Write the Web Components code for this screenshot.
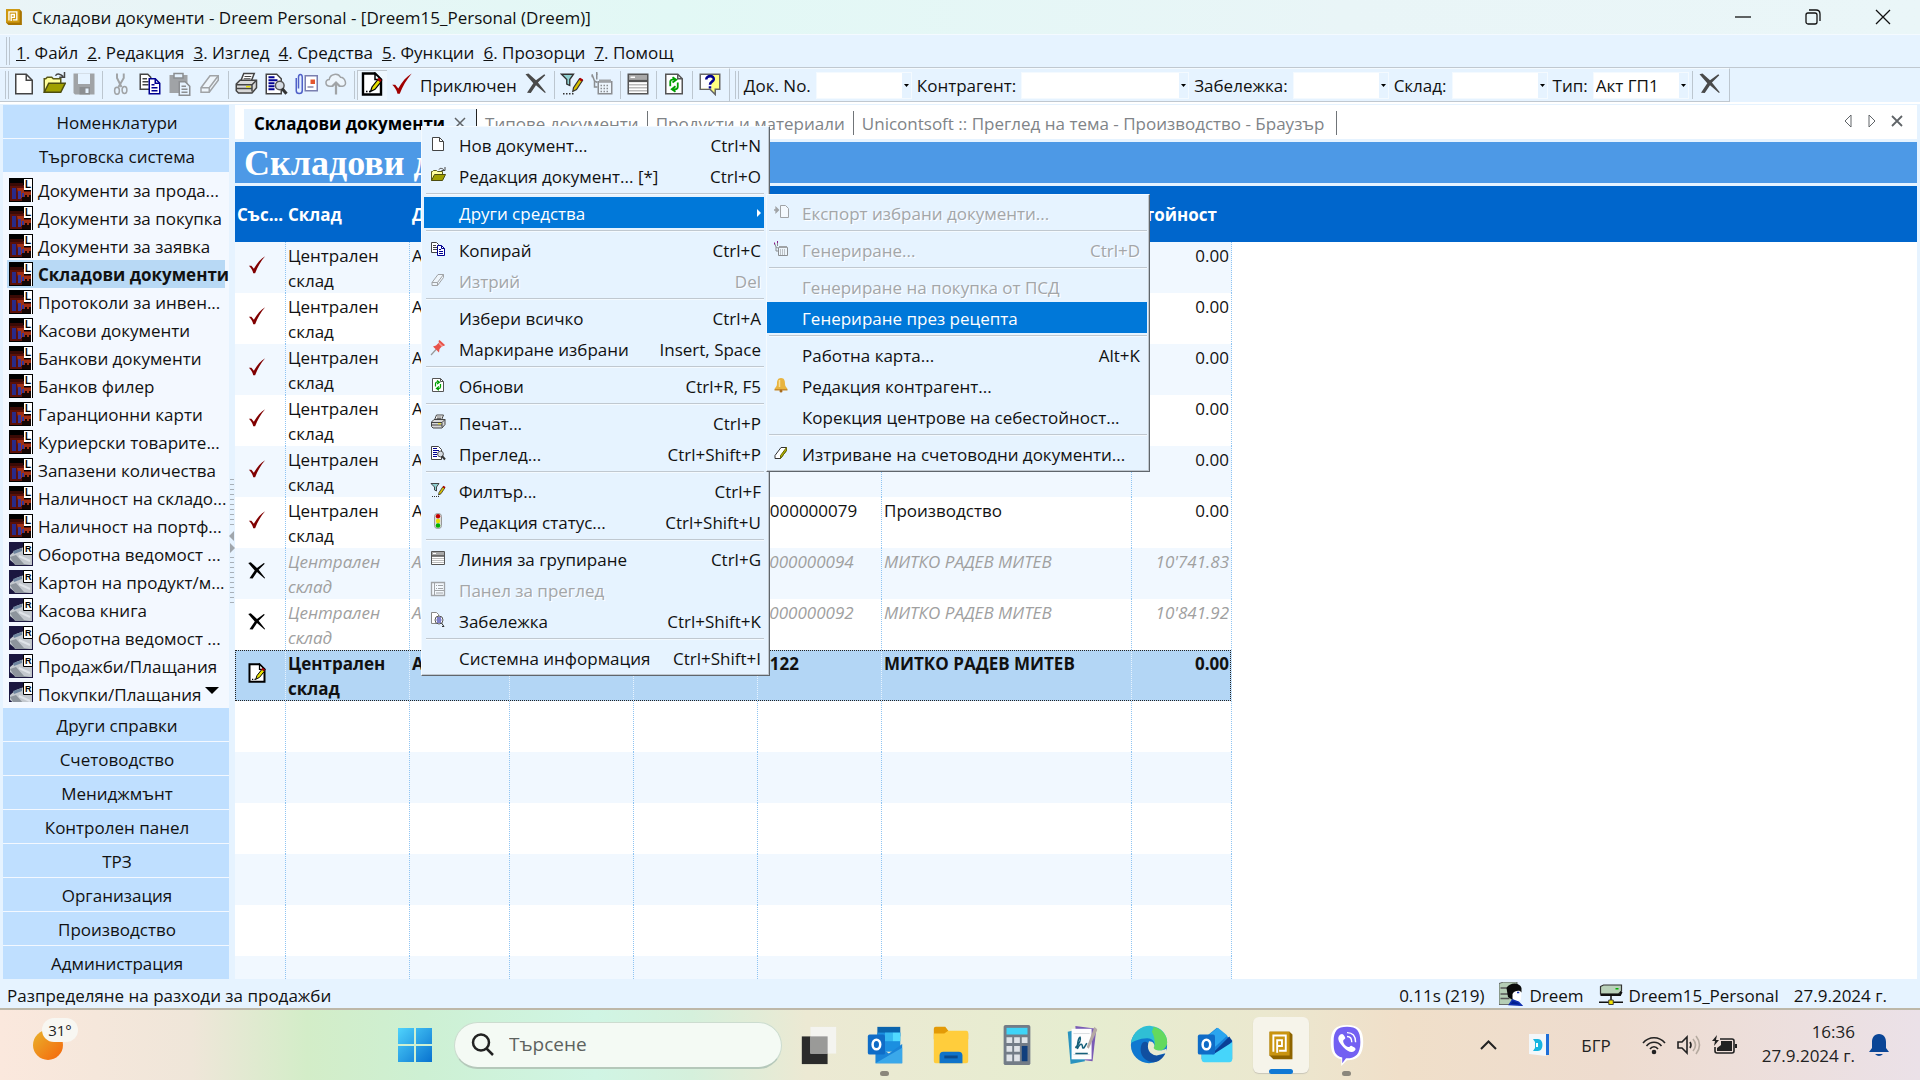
<!DOCTYPE html>
<html lang="bg">
<head>
<meta charset="utf-8">
<title>Складови документи - Dreem Personal</title>
<style>
    html, body { height: 100%; margin: 0; }
    body {
        font: 17px/25px "Open Sans", "Noto Sans", sans-serif;
        color: #111;
        background: #e6f3ff;
        overflow: hidden;
    }
    dreem-desktop { height: 100%; }
    #context-menu { left: 421px; top: 126px; width: 349px; }
    #tools-menu { left: 766px; top: 194px; width: 384px; --menu-start: 0px; --menu-end: 2px; --key-end: 7px; }
</style>
</head>
<body>

<dreem-desktop>
    <title-bar slot="title">Складови документи - Dreem Personal - [Dreem15_Personal (Dreem)]</title-bar>
    <menu-bar slot="menu" items="Файл,Редакция,Изглед,Средства,Функции,Прозорци,Помощ"></menu-bar>

    <tool-bar slot="tools">
        <tool-button icon="new" label="Нов"></tool-button>
        <tool-button icon="open" label="Отвори"></tool-button>
        <tool-button icon="save" label="Запис"></tool-button>
        <tool-sep></tool-sep>
        <tool-button icon="cut" label="Изрежи"></tool-button>
        <tool-button icon="copy" label="Копирай"></tool-button>
        <tool-button icon="paste" label="Постави"></tool-button>
        <tool-button icon="eraser-off" label="Изтрий"></tool-button>
        <tool-sep></tool-sep>
        <tool-button icon="print" label="Печат"></tool-button>
        <tool-button icon="preview" label="Преглед"></tool-button>
        <tool-button icon="attach" label="Прикачи"></tool-button>
        <tool-button icon="cloud" label="Облак"></tool-button>
        <tool-sep></tool-sep>
        <tool-button icon="edit" label="Редакция" pressed></tool-button>
        <tool-button icon="check" label="Приключен">Приключен</tool-button>
        <tool-button icon="cross" label="Анулиран"></tool-button>
        <tool-sep></tool-sep>
        <tool-button icon="filter" label="Филтър"></tool-button>
        <tool-button icon="generate" label="Генериране"></tool-button>
        <tool-sep></tool-sep>
        <tool-button icon="group" label="Групиране"></tool-button>
        <tool-sep></tool-sep>
        <tool-button icon="refresh" label="Обнови"></tool-button>
        <tool-sep></tool-sep>
        <tool-button icon="help" label="Помощ"></tool-button>
    </tool-bar>
    <tool-bar slot="tools">
        <tool-combo label="Док. No."></tool-combo>
        <tool-combo label="Контрагент:" wide></tool-combo>
        <tool-combo label="Забележка:"></tool-combo>
        <tool-combo label="Склад:"></tool-combo>
        <tool-combo label="Тип:" value="Акт ГП1"></tool-combo>
        <tool-sep></tool-sep>
        <tool-button icon="cross" label="Изчисти"></tool-button>
    </tool-bar>

    <side-nav slot="side"></side-nav>
    <doc-tabs slot="main">
        <span>Складови документи</span>
        <span>Типове документи</span>
        <span>Продукти и материали</span>
        <span>Unicontsoft :: Преглед на тема - Производство - Браузър</span>
    </doc-tabs>
    <doc-grid slot="main" heading="Складови документи"></doc-grid>

    <status-bar slot="status">
        Разпределяне на разходи за продажби
        <span slot="info">0.11s (219)</span>
        <span slot="user">Dreem</span>
        <span slot="db">Dreem15_Personal</span>
        <span slot="date">27.9.2024 г.</span>
    </status-bar>
    <task-bar slot="status"></task-bar>
</dreem-desktop>

<popup-menu id="context-menu">
    <menu-item icon="new" keys="Ctrl+N">Нов документ...</menu-item>
    <menu-item icon="open" keys="Ctrl+O">Редакция документ... [*]</menu-item>
    <menu-line></menu-line>
    <menu-item active submenu>Други средства</menu-item>
    <menu-line></menu-line>
    <menu-item icon="copy" keys="Ctrl+C">Копирай</menu-item>
    <menu-item icon="eraser-off" keys="Del" off>Изтрий</menu-item>
    <menu-line></menu-line>
    <menu-item keys="Ctrl+A">Избери всичко</menu-item>
    <menu-item icon="pin" keys="Insert, Space">Маркиране избрани</menu-item>
    <menu-line></menu-line>
    <menu-item icon="refresh" keys="Ctrl+R, F5">Обнови</menu-item>
    <menu-line></menu-line>
    <menu-item icon="print" keys="Ctrl+P">Печат...</menu-item>
    <menu-item icon="preview" keys="Ctrl+Shift+P">Преглед...</menu-item>
    <menu-line></menu-line>
    <menu-item icon="filter" keys="Ctrl+F">Филтър...</menu-item>
    <menu-item icon="lights" keys="Ctrl+Shift+U">Редакция статус...</menu-item>
    <menu-line></menu-line>
    <menu-item icon="group" keys="Ctrl+G">Линия за групиране</menu-item>
    <menu-item icon="panel" off>Панел за преглед</menu-item>
    <menu-item icon="note" keys="Ctrl+Shift+K">Забележка</menu-item>
    <menu-line></menu-line>
    <menu-item keys="Ctrl+Shift+I">Системна информация</menu-item>
</popup-menu>

<popup-menu id="tools-menu">
    <menu-item icon="export" off>Експорт избрани документи...</menu-item>
    <menu-line></menu-line>
    <menu-item icon="generate" keys="Ctrl+D" off>Генериране...</menu-item>
    <menu-line></menu-line>
    <menu-item off>Генериране на покупка от ПСД</menu-item>
    <menu-item active>Генериране през рецепта</menu-item>
    <menu-line></menu-line>
    <menu-item keys="Alt+K">Работна карта...</menu-item>
    <menu-item icon="bell">Редакция контрагент...</menu-item>
    <menu-item>Корекция центрове на себестойност...</menu-item>
    <menu-line></menu-line>
    <menu-item icon="eraser">Изтриване на счетоводни документи...</menu-item>
</popup-menu>

<script>
// 16x16 glyphs, shown at 16px in menus and 24px on toolbars
const GLYPHS = {
    'new': '<path d="M2.5 1.5h7l4 4v9h-11z" fill="#fff" stroke="#444"/><path d="M9.5 1.5v4h4" fill="none" stroke="#444"/>',
    'open': '<path d="M1.5 13.5v-9h1l1-1h3l1 1h5v3" fill="#ffff9c" stroke="#5a5a1a"/><path d="M1.5 13.5l3-6h11l-3 6z" fill="#a0a000" stroke="#4d4d10"/><path d="M9 2.5c1-2 4-1 5 .5M15 0v3.5h-3.500" fill="none" stroke="#444"/>',
    'save': '<path d="M1 1h14v14H2l-1-1z" fill="#a0a3a6"/><path d="M4 1h8v7H4z" fill="#e6f3ff"/><path d="M5 10h7v5H5z" fill="#8b8e91"/><path d="M9 11h2v3H9z" fill="#e6f3ff"/>',
    'cut': '<path d="M6 1v3l3 6M10.500 1v3L7 10" fill="none" stroke="#a0a3a6" stroke-width="1.300"/><ellipse cx="6" cy="12.500" rx="1.600" ry="2.300" fill="none" stroke="#a0a3a6"/><ellipse cx="11" cy="12" rx="1.600" ry="2.300" fill="none" stroke="#a0a3a6"/>',
    'copy': '<path d="M1.500 1.500h5l2 2v8h-7z" fill="#fff" stroke="#444"/><path d="M3 4.500h3M3 6.500h4M3 8.500h4" stroke="#444"/><path d="M7.500 4.500h4l3 3v7h-7z" fill="#fff" stroke="#000090"/><path d="M11.500 4.500v3h3M9 8.500h2M9 10.500h4M9 12.500h4" fill="none" stroke="#000090"/>',
    'paste': '<path d="M1.500 2.500h11v11h-11z" fill="#a0a3a6" stroke="#a0a3a6"/><path d="M4 1h6v3H4z" fill="#e6f3ff" stroke="#8b8e91"/><path d="M7.500 6.500h4l3 3v6h-7z" fill="#e6f3ff" stroke="#8b8e91"/><path d="M9 9.500h3M9 11.500h4M9 13.500h4" stroke="#8b8e91"/>',
    'eraser-off': '<path d="M2 10.500l6-8h5.500v3l-6 8H2z" fill="#eef5fb" stroke="#a0a3a6"/><path d="M2 10.500h5.500l6-8M7.500 10.500v3" fill="none" stroke="#a0a3a6"/>',
    'eraser': '<path d="M2 10.500l6-8h5.500v3l-6 8H2z" fill="#fff" stroke="#333"/><path d="M7.500 10.500l6-8v3l-6 8z" fill="#b5b500" stroke="#6b6b00"/>',
    'print': '<path d="M4.500 6l2-5h7l-2 5z" fill="#fff" stroke="#444"/><path d="M7 3h4.500M6.500 4.500H11" stroke="#444" stroke-width=".800"/><path d="M1.500 8l2.500-2.500h11v5l-3 3.500H3l-1.500-1.500z" fill="#d8d8d8" stroke="#444"/><path d="M1.500 8.500h10.500l3-3M12 8.500V13M2 11h10" fill="none" stroke="#444"/><path d="M8 9.300h3v1H8z" fill="#e8e000"/>',
    'preview': '<path d="M1.500 1.500h7l3 3v10h-10z" fill="#fff" stroke="#444"/><path d="M3 3.500h4M3 5.500h6M3 7.500h4M3 9.500h4M3 11.500h4" stroke="#000090" stroke-width="1.200"/><circle cx="10.500" cy="9" r="2.900" fill="#d5dbe2" stroke="#555"/><path d="M12 11l3 3.500" stroke="#333" stroke-width="2"/>',
    'attach': '<path d="M7.500 2.500h8v10h-8z" fill="#fff" stroke="#7a7fb0"/><path d="M11 5h3v3h-3z" fill="#e4572e"/><path d="M9 10h4" stroke="#88a"/><path d="M1.500 4v8.500c0 2.500 4 2.500 4 0V3.500c0-2.500-2.500-2.500-2.500 0V11" fill="none" stroke="#5060c8"/>',
    'cloud': '<path d="M4 9.500C.5 9.500.5 5 3.500 5 4 1 9.500.5 11 3.500c3 0 5 5.500 1.500 6H10M6 9.500H4" fill="#edf5fc" stroke="#a0a3a6"/><path d="M8 15V7M5.500 9.500L8 7l2.500 2.500" fill="none" stroke="#a0a3a6" stroke-width="1.500"/>',
    'edit': '<path d="M2 1h8l4 4v10H2z" fill="#fff" stroke="#000" stroke-width="1.600"/><path d="M10 1v4h4z" fill="#fff" stroke="#000"/><path d="M7 13l1-3 4-5 2 1.500-4 5z" fill="#e8e000" stroke="#000" stroke-width=".800"/><path d="M12 4.500l2 1.500" stroke="#b00000" stroke-width="1.600"/><path d="M4 13h3" stroke="#000" stroke-dasharray="1 1"/>',
    'check': '<path d="M1.500 8.500l2 0 2 2.500C8 6.500 11 3 14.500 1 11 5 8.500 9.500 6.500 14.500l-1.500 0C4.500 12 3 10 1.500 8.500z" fill="var(--tick, #a00000)"/>',
    'cross': '<path d="M1 1.500L3 1l5 4.500L13.500 1.500l.7.700L9.300 7l5.200 6.500-.5.500L8 8.800 4.500 14 2 13.800 6.200 7.500z" fill="var(--cross, #4a4a4a)"/>',
    'filter': '<path d="M1 1.500h8L6.500 5v4l-2-1V5z" fill="#8fd0d0" stroke="#333" stroke-width=".900"/><path d="M8.500 13l.5-2.500 4-6 2 1.200-4 6z" fill="#d8c000" stroke="#333" stroke-width=".800"/><path d="M13 4.500l2 1.200" stroke="#b00000" stroke-width="1.600"/><path d="M2 14.500h7" stroke="#333" stroke-dasharray="1 1"/>',
    'generate': '<path d="M5.500 6.500h9v8h-9z" fill="#edf5fc" stroke="#8b8e91"/><path d="M6 5h8v2H6z" fill="#a0a3a6"/><path d="M7 9h6M7 11h6M7 13h6" stroke="#8b8e91" stroke-dasharray="1 1"/><path d="M1.500 2l1.500 4 2 1M4.500 1v4M3 6v4h2" fill="none" stroke="#8b8e91"/><path d="M1.500 1.500v2M4.500 0v2" stroke="var(--spark, #8b8e91)"/>',
    'group': '<path d="M1.500 1.500h13v13h-13z" fill="#fff" stroke="#555"/><path d="M2 2h12v4H2z" fill="#a8a8a8"/><path d="M3 3.500h3" stroke="#fff"/><path d="M1.500 6h13" stroke="#555" stroke-width="1.500"/><path d="M2 8.500h12M2 10.500h12M2 12.500h12" stroke="#bbb"/>',
    'refresh': '<path d="M2.500 1.500h8l3 3v10h-11z" fill="#fff" stroke="#555"/><path d="M10.500 1.500v3h3" fill="none" stroke="#555"/><path d="M5.500 9.500V6.500c0-2 4-2 4-1M7 3.500l2.500 1.700L7 7M10.500 7v3c0 2-4 2-4 1M9 9.500l-2.500 2L9 13.200" fill="none" stroke="#00a000" stroke-width="1.200"/>',
    'help': '<path d="M1.500 1.500h13v10h-3v3.500l-3.500-3.500h-6.500z" fill="#ffff80" stroke="#666"/><path d="M5 2h4v9H2v-9z" fill="#fff"/><path d="M5.500 5c0-3 5.500-3 5 0-.3 1.500-2.500 1.500-2.500 3.500M8 9.500v1.500" fill="none" stroke="#000090" stroke-width="1.700"/>',
    'pin': '<path d="M1 15l5.500-6" stroke="#999" stroke-width="1.200"/><path d="M3 6.500l3-1 3-3-.5-1.500 1-1 5.500 5-1 1-1.500-.3-3 3.300-.5 3.500z" fill="#e8524a"/><path d="M9 3l3.500 3.500" stroke="#f59a92" stroke-width="1.500"/>',
    'lights': '<rect x="4.500" y=".500" width="7" height="15" rx="3" fill="#ddd" stroke="#999"/><circle cx="8" cy="3.300" r="2.200" fill="#c00000"/><circle cx="8" cy="8" r="2.200" fill="#e8e000"/><circle cx="8" cy="12.500" r="2.300" fill="#00b000"/>',
    'panel': '<path d="M1.500 1.500h13v13h-13z" fill="#f4f9fe" stroke="#a0a3a6" stroke-width="1.300"/><path d="M4.500 2v12M6 4.500h1M8 4.500h5M6 7.500h1M8 7.500h5M5 9.500h9M6 12h7" stroke="#a0a3a6"/>',
    'note': '<path d="M1.500 .5h5l2 2v9h-7z" fill="#fff" stroke="#888"/><circle cx="9" cy="8" r="4" fill="#fff" stroke="#555"/><path d="M7 6h4M6.500 8h5M7 10h4" stroke="#000090"/><path d="M11.500 11l2.500 3.500h-2" stroke="#333" fill="none"/>',
    'export': '<path d="M7.500 1.500h5l3 3v9h-8z" fill="#f4f9fe" stroke="#a0a3a6"/><path d="M1 6h4M3 3.500L5.500 6 3 8.500z" stroke="#a0a3a6" fill="#a0a3a6" stroke-width="1.300"/>',
    'bell': '<path d="M8 1c3.500 0 4 3 4 6 0 2.500 2 3.500 2.500 5h-13C2 10.500 4 9.500 4 7c0-3 .500-6 4-6z" fill="#e8b440"/><path d="M6.500 3v7" stroke="#f9df95" stroke-width="1.500"/><path d="M1.500 12h13v1.500h-13z" fill="#c98a2b"/><circle cx="8" cy="14" r="1.500" fill="#a86a1c"/>',
    'ledger': '<path d="M0 0h24v24H0z" fill="#000"/><path d="M1 7h14v6h7v10H1z" fill="#5c1008"/><path d="M1 5h13v3H1z" fill="#3a0a05"/><path d="M8 10h7v4h7v6H10z" fill="#a03014"/><path d="M3 10h4v11H3z" fill="#2a2a88"/><path d="M9 13h3v8H9zM13 15h2v6h-2z" fill="#35359a"/><path d="M13 19h3v-2h2v2h2v-2h2v6H13z" fill="#140604"/><path d="M15 1h8v11h-8z" fill="#fff"/><text x="16" y="10" font-family="Liberation Sans" font-weight="bold" font-size="10">L</text><path d="M22.500 12v12" stroke="#fff"/>',
    'report': '<path d="M0 0h24v24H0z" fill="#1b1740"/><path d="M1 13l6-5 8-3v8h8v10H7L1 18z" fill="#c3c8ce"/><path d="M4 9l9-3v3L5 12z" fill="#6f86a0"/><path d="M1 15l6-2 8 9 6 1H6z" fill="#8d949c"/><path d="M10 14l11 5" stroke="#dfe3e8" stroke-width="2"/><path d="M14.500 .5h9v12h-9z" fill="#fff" stroke="#000"/><text x="16" y="10" font-family="Liberation Sans" font-weight="bold" font-size="9">R</text>',
    'dreem': '<path d="M1 1h12l2 2v12H3l-2-2z" fill="#a87400"/><path d="M1 1h12v12H1z" fill="#d09a10"/><path d="M3.500 11V3.500h7v7H7M5.500 11.500V5.800h2.800v2.500H6" fill="none" stroke="#fff" stroke-width="1.200"/>',
    'user': '<path d="M0 1l3-1h9v15H0z" fill="#b5ceb5" stroke="#444" stroke-width=".500"/><path d="M1 4h7M1 8h6M1 11h6" stroke="#555"/><path d="M5 4c2-4 9-4 10 0v3h-2c-3 0-3 2-4 5l-3-2z" fill="#0a0a0a"/><path d="M9 8c1-2 5-3 6-1l-.5 5-3 1-2.500-2z" fill="#fff"/><path d="M12 7h1.500M7 15l2-3 4 1.500 2 2z" stroke="#1030b0" fill="#002090"/>',
    'server': '<path d="M1 3l2-1h12v4l-2 2H1z" fill="#b9d1b9" stroke="#333" stroke-width=".800"/><path d="M11 4.500h2" stroke="#00b000"/><path d="M1 8.500h13l1-2" stroke="#111" stroke-width="1.500" fill="none"/><path d="M8 8v4M0 13.500h16" stroke="#111"/><path d="M6.500 12h3v3h-3z" fill="#f0e000" stroke="#333" stroke-width=".600"/>'
};

class AppIcon extends HTMLElement {
    constructor() {
        super();
        this.attachShadow({ mode: 'open' });
    }

    connectedCallback() {
        const name = this.getAttribute('name');
        const box = name === 'ledger' || name === 'report' ? 24 : 16;
        this.shadowRoot.innerHTML = `
        <style>
            :host { display: block; flex: none; width: var(--icon, 16px); height: var(--icon, 16px); }
            svg { display: block; width: 100%; height: 100%; }
        </style>
        <svg viewBox="0 0 ${box} ${box}" aria-hidden="true">${GLYPHS[name] || ''}</svg>
        `;
    }
}

class DreemDesktop extends HTMLElement {
    constructor() {
        super();
        this.attachShadow({ mode: 'open' });
        this.shadowRoot.innerHTML = `
        <style>
            :host { display: flex; flex-direction: column; }
            .tools {
                display: flex;
                height: 34px;
                border-top: 1px solid #c0c8d0;
                border-bottom: 2px solid #fff;
            }
            .work { flex: 1; min-height: 0; display: flex; padding: 1px 3px 0; }
            .grip {
                width: 6px;
                display: flex;
                flex-direction: column;
                justify-content: center;
                align-items: center;
                gap: 4px;
            }
            .grip i { width: 4px; height: 48px; background: repeating-linear-gradient(#a8b0b8 0 1px, transparent 1px 5px); }
            .grip svg { display: block; }
            main { flex: 1; min-width: 0; display: flex; flex-direction: column; }
        </style>
        <slot name="title"></slot>
        <slot name="menu"></slot>
        <div class="tools"><slot name="tools"></slot></div>
        <div class="work">
            <slot name="side"></slot>
            <div class="grip">
                <i></i>
                <svg width="6" height="22"><path d="M5 0v10L0 5zM1 12v10l5-5z" fill="#a0a6ac"/></svg>
                <i></i>
            </div>
            <main><slot name="main"></slot></main>
        </div>
        <slot name="status"></slot>
        `;
    }
}

class TitleBar extends HTMLElement {
    constructor() {
        super();
        this.attachShadow({ mode: 'open' });
        this.shadowRoot.innerHTML = `
        <style>
            :host {
                display: flex;
                align-items: center;
                gap: 9px;
                height: 34px;
                padding: 0 2px 0 5px;
                background: linear-gradient(90deg, #eaf4f7, #e2f8f5 35%, #e9f5f7 70%, #eaf6f8);
            }
            app-icon { --icon: 18px; }
            span { flex: 1; }
            .buttons { display: flex; }
            button { width: 70px; height: 34px; padding: 0; border: 0; background: none; }
            svg { display: block; margin: auto; fill: none; stroke: #111; stroke-width: 1.3; }
        </style>
        <app-icon name="dreem"></app-icon>
        <span><slot></slot></span>
        <div class="buttons">
            <button aria-label="Минимизиране"><svg width="16" height="16"><path d="M0 8h16"/></svg></button>
            <button aria-label="Възстановяване"><svg width="16" height="16"><rect x="1" y="4" width="11" height="11" rx="2"/><path d="M4 1h7q4 0 4 4v7"/></svg></button>
            <button aria-label="Затваряне"><svg width="16" height="16"><path d="M1 1l14 14M15 1L1 15"/></svg></button>
        </div>
        `;
    }
}

class MenuBar extends HTMLElement {
    constructor() {
        super();
        this.attachShadow({ mode: 'open' });
    }

    connectedCallback() {
        const items = this.getAttribute('items').split(',');
        this.shadowRoot.innerHTML = `
        <style>
            :host { display: flex; align-items: center; height: 32px; padding-left: 6px; border-top: 1px solid #f4faff; }
            i { width: 2px; height: 28px; border: 1px solid #bcc6cf; border-width: 0 1px; margin-right: 2px; }
            button { font: inherit; color: inherit; border: 0; background: none; padding: 2px 5px 0 4px; }
        </style>
        <i></i>
        ${items.map((text, n) => `<button><u>${n + 1}</u>. ${text}</button>`).join('')}
        `;
    }
}

class ToolBar extends HTMLElement {
    constructor() {
        super();
        this.attachShadow({ mode: 'open' });
        this.shadowRoot.innerHTML = `
        <style>
            :host {
                display: flex;
                align-items: center;
                padding: 0 4px 0 5px;
                border-right: 1px solid #bcc6cf;
                border-bottom: 1px solid #c0c8d0;
                border-top: 1px solid #f4faff;
            }
            i { width: 2px; height: 28px; border: 1px solid #bcc6cf; border-width: 0 1px; }
        </style>
        <i></i>
        <slot></slot>
        `;
    }
}

class ToolSep extends HTMLElement {
    constructor() {
        super();
        this.attachShadow({ mode: 'open' });
        this.shadowRoot.innerHTML = `
        <style>
            :host { display: block; width: 1px; height: 28px; margin: 0 2px 0 3px; background: #bcc6cf; }
        </style>
        `;
    }
}

class ToolButton extends HTMLElement {
    constructor() {
        super();
        this.attachShadow({ mode: 'open' });
    }

    connectedCallback() {
        this.shadowRoot.innerHTML = `
        <style>
            :host { display: block; --icon: 24px; }
            button {
                display: flex;
                align-items: center;
                gap: 6px;
                height: 30px;
                padding: 0 3px;
                border: 0;
                background: none;
                font: inherit;
                color: inherit;
            }
            app-icon { margin-bottom: 3px; }
            span { padding: 1px 1px 0 0; }
            span.empty { display: none; }
            :host([pressed]) button { background: #eef7ff; box-shadow: inset 1px 1px #c0c8d0; }
        </style>
        <button aria-label="${this.getAttribute('label')}">
            <app-icon name="${this.getAttribute('icon')}"></app-icon>
            <span class="${this.textContent.trim() ? '' : 'empty'}"><slot></slot></span>
        </button>
        `;
    }
}

class ToolCombo extends HTMLElement {
    constructor() {
        super();
        this.attachShadow({ mode: 'open' });
    }

    connectedCallback() {
        this.shadowRoot.innerHTML = `
        <style>
            :host { display: flex; align-items: center; gap: 5px; margin-left: 5px; }
            label { padding-top: 1px; }
            .box { position: relative; }
            select {
                display: block;
                box-sizing: border-box;
                width: 96px;
                height: 27px;
                padding: 0 10px 0 2px;
                border: 1px solid #f4faff;
                border-radius: 0;
                appearance: none;
                font: inherit;
                color: inherit;
                background: linear-gradient(90deg, #fff calc(100% - 9px), #e6f3ff 0);
            }
            :host([wide]) select { width: 168px; }
            svg { position: absolute; right: 3px; top: 12px; pointer-events: none; }
        </style>
        <label for="field">${this.getAttribute('label')}</label>
        <div class="box">
            <select id="field"><option>${this.getAttribute('value') || ''}</option></select>
            <svg width="5" height="3"><path d="M0 0h5L2.500 3z"/></svg>
        </div>
        `;
    }
}

class SideNav extends HTMLElement {
    constructor() {
        super();
        this.attachShadow({ mode: 'open' });
    }

    connectedCallback() {
        const ledgers = ['Документи за прода...', 'Документи за покупка', 'Документи за заявка', 'Складови документи',
            'Протоколи за инвен...', 'Касови документи', 'Банкови документи', 'Банков филер', 'Гаранционни карти',
            'Куриерски товарите...', 'Запазени количества', 'Наличност на складо...', 'Наличност на портф...'];
        const reports = ['Оборотна ведомост ...', 'Картон на продукт/м...', 'Касова книга', 'Оборотна ведомост ...',
            'Продажби/Плащания', 'Покупки/Плащания'];
        const below = ['Други справки', 'Счетоводство', 'Мениджмънт', 'Контролен панел', 'ТРЗ', 'Организация',
            'Производство', 'Администрация'];

        const group = text => `<button class="group">${text}</button>`;
        const item = icon => text => `
            <button class="item${text === 'Складови документи' ? ' current' : ''}">
                <app-icon name="${icon}"></app-icon>${text}
            </button>`;

        this.shadowRoot.innerHTML = `
        <style>
            :host {
                flex: none;
                display: flex;
                flex-direction: column;
                gap: 1px;
                width: 226px;
                background: #f3f8ff;
                --icon: 24px;
            }
            button { font: inherit; color: inherit; border: 0; white-space: nowrap; }
            .group { flex: none; height: 33px; padding: 2px 0 0 2px; background: #bfdfff; }
            .list {
                flex: 1;
                min-height: 0;
                overflow: hidden;
                position: relative;
                padding: 3px 4px 0;
                border-bottom: 5px solid #f3f8ff;
            }
            .item {
                display: flex;
                align-items: center;
                gap: 5px;
                width: 100%;
                height: 28px;
                padding: 0 0 0 2px;
                background: none;
            }
            .current { background: #b8d9f5; font-weight: bold; }
            .down { position: absolute; right: 10px; bottom: 8px; padding: 0; background: none; }
            .down svg { display: block; }
        </style>
        ${group('Номенклатури')}
        ${group('Търговска система')}
        <div class="list">
            ${ledgers.map(item('ledger')).join('')}
            ${reports.map(item('report')).join('')}
            <button class="down" aria-label="Надолу"><svg width="14" height="7"><path d="M0 0h14L7 7z"/></svg></button>
        </div>
        ${below.map(group).join('')}
        `;
    }
}

class DocTabs extends HTMLElement {
    constructor() {
        super();
        this.attachShadow({ mode: 'open' });
    }

    connectedCallback() {
        const names = [...this.querySelectorAll('span')].map(el => el.textContent);
        this.shadowRoot.innerHTML = `
        <style>
            :host { display: flex; height: 34px; padding-left: 9px; background: #fff; margin-bottom: 3px; }
            button { font: inherit; border: 0; background: none; padding: 0; }
            .tab {
                display: flex;
                align-items: center;
                gap: 9px;
                height: 24px;
                margin-top: 6px;
                padding: 0 8px;
                color: #808488;
                border-right: 1px solid #707478;
            }
            .tab:last-of-type { padding-right: 12px; }
            .tab.on {
                height: 30px;
                margin-top: 4px;
                padding: 0 10px 2px;
                box-sizing: border-box;
                color: #000;
                font-weight: bold;
                background: #e6f3ff;
                border-right: 1px solid #222;
            }
            .nav { margin-left: auto; display: flex; align-items: center; gap: 14px; padding: 0 14px 2px 0; }
            svg { display: block; fill: none; stroke: #606468; }
        </style>
        ${names.map((name, n) => n
            ? `<button class="tab">${name}</button>`
            : `<button class="tab on">${name}<svg width="12" height="12"><path d="M1 1l10 10M11 1L1 11" stroke-width="1.500"/></svg></button>`).join('')}
        <div class="nav">
            <button aria-label="Назад"><svg width="10" height="14"><path d="M8 1v12L2 7z"/></svg></button>
            <button aria-label="Напред"><svg width="10" height="14"><path d="M2 1v12l6-6z"/></svg></button>
            <button aria-label="Затвори"><svg width="12" height="14"><path d="M1 2l10 10M11 2L1 12" stroke-width="1.800"/></svg></button>
        </div>
        `;
    }
}

class DocGrid extends HTMLElement {
    constructor() {
        super();
        this.attachShadow({ mode: 'open' });
    }

    connectedCallback() {
        const rows = [
            ...Array(5).fill(['check', '', '', '0.00', '']),
            ['check', '0000000079', 'Производство', '0.00', ''],
            ['cross', '0000000094', 'МИТКО РАДЕВ МИТЕВ', "10'741.83", 'void'],
            ['cross', '0000000092', 'МИТКО РАДЕВ МИТЕВ', "10'841.92", 'void'],
            ['edit', '1122', 'МИТКО РАДЕВ МИТЕВ', '0.00', 'current']
        ];
        const blank = '<tr>' + '<td></td>'.repeat(9) + '</tr>';

        this.shadowRoot.innerHTML = `
        <style>
            :host { flex: 1; min-height: 0; overflow: hidden; display: block; background: #fff; }
            h1 {
                margin: 0;
                padding: 0 9px;
                height: 41px;
                font: bold 36px/42px "Liberation Serif", serif;
                color: #fff;
                background: #4d99e6;
                border-bottom: 3px solid #e6f3ff;
            }
            table { width: 100%; table-layout: fixed; border-collapse: separate; border-spacing: 0; }
            th {
                height: 56px;
                padding: 0 2px;
                box-sizing: border-box;
                text-align: left;
                white-space: nowrap;
                color: #fff;
                background: #0066cc;
            }
            td {
                height: 51px;
                box-sizing: border-box;
                padding: 1px 2px 0;
                line-height: 25px;
                vertical-align: top;
                border-right: 1px dotted #8fc4f2;
            }
            td:first-child { vertical-align: middle; --icon: 20px; --tick: #800000; --cross: #000; }
            td:first-child app-icon { margin: 0 0 6px 10px; }
            td:nth-child(8) { text-align: right; }
            tr:nth-child(odd) td { background: #f1f8ff; }
            tr td:last-child { background: #fff !important; border: 0; }
            .void { color: #a0a0a0; font-style: italic; }
            tr.current td {
                position: relative;
                font-weight: bold;
                background: #b3d6f5;
                border-color: #e6f3ff;
            }
            /* focus frame drawn over the cells */
            tr.current td:not(:last-child)::after {
                content: "";
                position: absolute;
                inset: 0;
                border: 0 dotted #222;
                border-width: 1px 0;
            }
            tr.current td:first-child::after { border-left-width: 1px; }
            tr.current td:nth-child(8)::after { border-right-width: 1px; }
        </style>
        <h1>${this.getAttribute('heading')}</h1>
        <table>
            <colgroup>
                <col width="51"><col width="124"><col width="100"><col width="124"><col width="124">
                <col width="124"><col width="250"><col width="100"><col>
            </colgroup>
            <thead>
                <tr><th>Със...</th><th>Склад</th><th>Д</th><th></th><th></th><th></th><th></th><th>Стойност</th><th></th></tr>
            </thead>
            <tbody>
                ${rows.map(([state, number, client, total, kind]) => `
                <tr class="${kind}">
                    <td><app-icon name="${state}"></app-icon></td>
                    <td>Централен склад</td><td>А</td><td></td><td></td>
                    <td>${number}</td><td>${client}</td><td>${total}</td><td></td>
                </tr>`).join('')}
                ${blank.repeat(6)}
            </tbody>
        </table>
        `;
    }
}

class PopupMenu extends HTMLElement {
    constructor() {
        super();
        this.attachShadow({ mode: 'open' });
        this.shadowRoot.innerHTML = `
        <style>
            :host {
                position: absolute;
                display: block;
                box-sizing: border-box;
                padding: 2px var(--menu-end, 5px) 2px var(--menu-start, 2px);
                background: #e6f3ff;
                border: 1px solid #f4faff;
                border-right-color: #60666c;
                border-bottom-color: #60666c;
                box-shadow: inset -1px -1px #c0c8d0;
                --spark: #8a1c8a;
            }
        </style>
        <slot></slot>
        `;
    }
}

class MenuLine extends HTMLElement {
    constructor() {
        super();
        this.attachShadow({ mode: 'open' });
        this.shadowRoot.innerHTML = `
        <style>
            :host { display: block; height: 1px; margin: 2px 0 2px 2px; background: #c0c8d0; border-bottom: 1px solid #f4faff; }
        </style>
        `;
    }
}

class MenuItem extends HTMLElement {
    constructor() {
        super();
        this.attachShadow({ mode: 'open' });
    }

    connectedCallback() {
        const off = this.hasAttribute('off');
        this.shadowRoot.innerHTML = `
        <style>
            :host { display: block; }
            button {
                display: flex;
                align-items: center;
                width: 100%;
                height: 31px;
                padding: 0 var(--key-end, 3px) 0 6px;
                border: 0;
                background: none;
                font: inherit;
                color: inherit;
                text-align: left;
                white-space: nowrap;
            }
            app-icon { margin-bottom: 2px; }
            span { flex: 1; padding: 2px 0 0 13px; }
            kbd { font: inherit; padding-top: 1px; }
            button:disabled { color: #a3a6a9; text-shadow: 1px 1px #fff; }
            :host([active]) button { color: #fff; background: #0078d9; }
        </style>
        <button ${off ? 'disabled' : ''}>
            <app-icon name="${this.getAttribute('icon') || ''}"></app-icon>
            <span><slot></slot></span>
            ${this.hasAttribute('keys') ? `<kbd>${this.getAttribute('keys')}</kbd>` : ''}
            ${this.hasAttribute('submenu') ? '<svg width="4" height="8"><path d="M0 0v8l4-4z" fill="#fff"/></svg>' : ''}
        </button>
        `;
    }
}

class StatusBar extends HTMLElement {
    constructor() {
        super();
        this.attachShadow({ mode: 'open' });
        this.shadowRoot.innerHTML = `
        <style>
            :host {
                display: flex;
                align-items: center;
                box-sizing: border-box;
                height: 29px;
                padding: 3px 33px 0 7px;
                --icon: 24px;
            }
            .text { flex: 1; }
            .cell { display: flex; align-items: center; gap: 6px; margin-left: 15px; }
            app-icon { margin-bottom: 2px; }
        </style>
        <span class="text"><slot></slot></span>
        <span class="cell"><slot name="info"></slot></span>
        <span class="cell"><app-icon name="user"></app-icon><slot name="user"></slot></span>
        <span class="cell"><app-icon name="server"></app-icon><slot name="db"></slot></span>
        <span class="cell"><slot name="date"></slot></span>
        `;
    }
}

// Pinned programs, drawn on a 44x46 grid
const APPS = [
    ['Изглед на задачи', '', '<path d="M4 14h27v29H4z" fill="#2b2b2b"/><path d="M13 4h27v28H13z" fill="#f4f4f2" opacity=".92"/><path d="M13 14h18v18H13z" fill="#9a9a98"/>'],
    ['Outlook', 'run', '<path d="M14 4h24v10H14z" fill="#0a64ad"/><path d="M14 10h24v20H14z" fill="#1b8fe0"/><path d="M22 10h8v9h-8z" fill="#35b8f1"/><path d="M30 10h8v9h-8z" fill="#50d9ff"/><path d="M12 22l14 10 14-10v20H12z" fill="#1a84d8"/><path d="M12 42l28-16v16z" fill="#3aa8ea"/><rect x="4" y="12" width="18" height="21" rx="2" fill="#0f6cc7"/><ellipse cx="13" cy="22.500" rx="4" ry="5" fill="none" stroke="#fff" stroke-width="2.600"/>'],
    ['Файлове', '', '<path d="M4 6q0-2 2-2h10l4 5h18q2 0 2 2v6H4z" fill="#e39a06"/><path d="M4 11h11l4-3h19q2 0 2 2v30q0 2-2 2H6q-2 0-2-2z" fill="#ffcd3c"/><path d="M10 42V34q0-4 4-4h16q4 0 4 4v8z" fill="#0f73c9"/><path d="M15 35.500h14" stroke="#0a4a8c" stroke-width="3"/>'],
    ['Калкулатор', '', '<rect x="8" y="2" width="28" height="42" rx="2" fill="#737c87"/><path d="M11 5h22v7H11z" fill="#3fd4f7"/><g fill="#dfe3e8"><path d="M11 15h6v6h-6zM19 15h6v6h-6zM27 15h6v6h-6zM11 24h6v6h-6zM19 24h6v6h-6zM11 33h6v7h-6zM19 33h6v7h-6z"/></g><path d="M27 24h6v16h-6z" fill="#113f7d"/>'],
    ['Whiteboard', '', '<path d="M14 3l22 3-4 34-16-2z" fill="#7a5bb5"/><path d="M6 9l14-3 4 34-15 3z" fill="#2a93bf"/><path d="M10 6h21v32H10z" fill="#fdfdfd"/><path d="M12 11h17M12 33h17" stroke="#d8dce0"/><path d="M14 26c3-3 6-8 5-11-2 0-3 8-3 12 2-4 4-6 5-4s0 4 2 3l3-5M14 32h13" fill="none" stroke="#15607a" stroke-width="1.600"/><path d="M34 4l-8 21 2 2 9-20z" fill="#b5a9a4"/>'],
    ['Edge', '', '<circle cx="22" cy="23" r="19" fill="#0f78d0"/><path d="M3 21C5 8 16 2 24 3c12 1 17 10 17 17 0 5-4 9-9 9-4 0-6-1-5-3 3-5-1-10-7-10C12 16 5 20 3 21z" fill="#2fbfd5"/><path d="M27 4c10 3 14 10 14 16 0 5-4 9-9 9-4 0-6-1-5-3 2-4 1-12-2-17z" fill="#63d95e"/><path d="M14 23c-3 10 4 18 13 18 5 0 10-4 12-9-9 4-17 1-17-8 0-4-6-7-8-1z" fill="#114fa0"/><path d="M22 19c-3 7 0 14 8 15l11-3-1-4c-5 3-13 2-13-1 2-4-1-7-5-7z" fill="#eaead2"/>'],
    ['Поща', '', '<path d="M8 18L24 5l16 13v20H8z" fill="#1680d8"/><path d="M16 12L25 5l10 8-14 13z" fill="#2aa5ef"/><path d="M20 31l17-17 3 5-13 15z" fill="#0a3f96"/><path d="M8 26l12 7 20-13v18q0 3-3 3H11q-3 0-3-3z" fill="#46d5fa"/><rect x="4" y="12" width="18" height="21" rx="2" fill="#0f6cc7"/><ellipse cx="13" cy="22.500" rx="4" ry="5" fill="none" stroke="#fff" stroke-width="2.600"/>'],
    ['Dreem', 'on', '<path d="M10 9h21l3 3v26H14l-4-4z" fill="#8e6400"/><path d="M10 9h21v25H10z" fill="#c99410"/><path d="M14 30V13h13v16H20M18 31V18h5v6h-4" fill="none" stroke="#fff" stroke-width="2"/>'],
    ['Viber', 'run', '<path d="M22 2c12 0 17 5 17 18s-6 19-17 19l-6 6v-7C8 36 5 30 5 20 5 7 10 2 22 2z" fill="#fff"/><path d="M22 4c10 0 14 4 14 16s-5 17-14 17h-1l-4 5v-6C9 34 8 29 8 20 8 8 12 4 22 4z" fill="#7360f2"/><path d="M15 12c-4 3-2 8 3 13s9 7 12 4c2-2 1-3-3-5-2-1-2 2-4 1-3-1-5-4-5-6s3-2 2-4c-2-4-3-4-5-3z" fill="#fff"/><path d="M22 10c6 0 9 4 9 10M22 14c4 0 5 3 5 6" fill="none" stroke="#fff" stroke-width="1.500"/>']
];

class TaskBar extends HTMLElement {
    constructor() {
        super();
        this.attachShadow({ mode: 'open' });
        this.shadowRoot.innerHTML = `
        <style>
            :host {
                display: flex;
                align-items: center;
                box-sizing: border-box;
                height: 72px;
                padding-right: 31px;
                color: #222;
                border-top: 2px solid #bdb7a8;
                background: linear-gradient(90deg, #fbe8dd, #efe6d9 10%, #d3edc8 16%, #cdf0d3 22%, #d0f5e4 31%,
                    #d5f0dc 36%, #ece9d3 42%, #e6edd0 56%, #ebe8cf 66%, #f0dfc9 73%, #eedccf 84%, #ebe1e8);
            }
            button { padding: 0; border: 0; background: none; font: inherit; color: inherit; }
            svg { display: block; margin: auto; }
            .weather { width: 382px; box-sizing: border-box; padding-left: 32px; }
            .weather button { position: relative; display: block; width: 46px; height: 44px; }
            .weather b {
                position: absolute;
                left: 10px;
                top: -5px;
                width: 36px;
                font: 15px/24px "Open Sans", sans-serif;
                border-radius: 12px;
                background: #f8f7f2;
            }
            .app { position: relative; width: 66px; height: 66px; }
            .app.on::before {
                content: "";
                position: absolute;
                inset: 5px;
                border-radius: 6px;
                background: #f6f4ea;
                box-shadow: 0 1px 1px #c9c6b8;
            }
            .app svg { position: relative; }
            .app.run::after, .app.on::after {
                content: "";
                position: absolute;
                left: 28px;
                bottom: 2px;
                width: 9px;
                height: 5px;
                border-radius: 3px;
                background: #8b877c;
            }
            .app.on::after { left: 21px; bottom: 4px; width: 24px; background: #0f78d4; }
            .search {
                display: flex;
                align-items: center;
                gap: 14px;
                width: 328px;
                height: 47px;
                box-sizing: border-box;
                margin: 0 4px 0 6px;
                padding-left: 16px;
                border: 1px solid #ccdccf;
                border-bottom: 2px solid #b5c8ba;
                border-radius: 24px;
                background: #f4faf4;
            }
            .search svg { margin: 0; }
            input {
                flex: 1;
                min-width: 0;
                padding: 0;
                border: 0;
                background: none;
                font: 19px/25px "Open Sans", sans-serif;
            }
            input::placeholder { color: #5d625e; opacity: 1; }
            .tray { margin-left: auto; display: flex; align-items: center; gap: 31px; }
            .state { display: flex; gap: 11px; }
            .clock { display: flex; align-items: center; gap: 14px; margin-left: -7px; text-align: right; line-height: 24px; }
            .clock div { margin-bottom: 2px; }
        </style>
        <div class="weather">
            <button aria-label="Времето">
                <svg width="46" height="44"><defs><linearGradient id="sun" x2="1" y2="1"><stop stop-color="#e9b32c"/><stop offset="1" stop-color="#f5650c"/></linearGradient></defs><circle cx="16" cy="22" r="15" fill="url(#sun)"/></svg>
                <b>31°</b>
            </button>
        </div>
        <button class="app" aria-label="Старт">
            <svg width="36" height="36"><defs><linearGradient id="win" x2="1" y2="1"><stop stop-color="#4fd3fc"/><stop offset="1" stop-color="#0872cf"/></linearGradient></defs><path d="M1 1h16v16H1zM19 1h16v16H19zM1 19h16v16H1zM19 19h16v16H19z" fill="url(#win)"/></svg>
        </button>
        <div class="search">
            <svg width="24" height="24"><path d="M15 15l7 7M18 9.500a8 8 0 1 1-16 0 8 8 0 0 1 16 0z" fill="none" stroke="#222" stroke-width="2.500"/></svg>
            <input type="text" placeholder="Търсене" aria-label="Търсене">
        </div>
        ${APPS.map(([name, state, art]) => `
        <button class="app ${state}" aria-label="${name}"><svg width="42" height="44" viewBox="0 0 44 46">${art}</svg></button>`).join('')}
        <div class="tray">
            <button aria-label="Скрити икони"><svg width="17" height="10"><path d="M1 9l7.500-7.500L16 9" fill="none" stroke="#222" stroke-width="2"/></svg></button>
            <button aria-label="Речник"><svg width="22" height="24"><path d="M17 1h4v21h-4z" fill="#1f6fd8"/><path d="M1 1h17v22l-17-2z" fill="#f3f7fa"/><path d="M5 6h5c6 0 6 12 0 12H5l2-3V9z" fill="#18b5e0"/><path d="M9 10v4" stroke="#fff" stroke-width="2"/></svg></button>
            <button>БГР</button>
            <div class="state">
                <svg width="24" height="20" fill="none" stroke="#222" stroke-width="1.600"><path d="M1 8C7 1 17 1 23 8M4.500 11c4-5 11-5 15 0M8 14c2-3 6-3 8 0"/><circle cx="12" cy="17" r="1.500" fill="#222"/></svg>
                <svg width="24" height="20" fill="none" stroke="#222" stroke-width="1.600"><path d="M1 7h4l5-5v16l-5-5H1zM13 7q2 3 0 6"/><path d="M16 4q5 6 0 12" stroke="#b5aaa0"/><path d="M19 1q7 9 0 18" stroke="#b5aaa0"/></svg>
                <svg width="26" height="20"><path d="M8 4h12q2 0 2 2v10q0 2-2 2H5q-2 0-2-2v-4" fill="none" stroke="#222" stroke-width="1.600"/><path d="M9 6h11v10H5v-3l4-3z" fill="#222"/><path d="M23 9h2v4h-2z" fill="#222"/><path d="M5 0L0 6h3l-1 5 5-6H4z" fill="#222"/></svg>
            </div>
            <div class="clock">
                <div>16:36<br>27.9.2024 г.</div>
                <button aria-label="Известия"><svg width="20" height="24"><path d="M10 1c5 0 7 4 7 8v6l3 4H0l3-4V9c0-4 2-8 7-8zM6 21h8q-4 4-8 0z" fill="#0a4596"/></svg></button>
            </div>
        </div>
        `;
    }
}

customElements.define('app-icon', AppIcon);
customElements.define('dreem-desktop', DreemDesktop);
customElements.define('title-bar', TitleBar);
customElements.define('menu-bar', MenuBar);
customElements.define('tool-bar', ToolBar);
customElements.define('tool-sep', ToolSep);
customElements.define('tool-button', ToolButton);
customElements.define('tool-combo', ToolCombo);
customElements.define('side-nav', SideNav);
customElements.define('doc-tabs', DocTabs);
customElements.define('doc-grid', DocGrid);
customElements.define('popup-menu', PopupMenu);
customElements.define('menu-line', MenuLine);
customElements.define('menu-item', MenuItem);
customElements.define('status-bar', StatusBar);
customElements.define('task-bar', TaskBar);
</script>
</body>
</html>
